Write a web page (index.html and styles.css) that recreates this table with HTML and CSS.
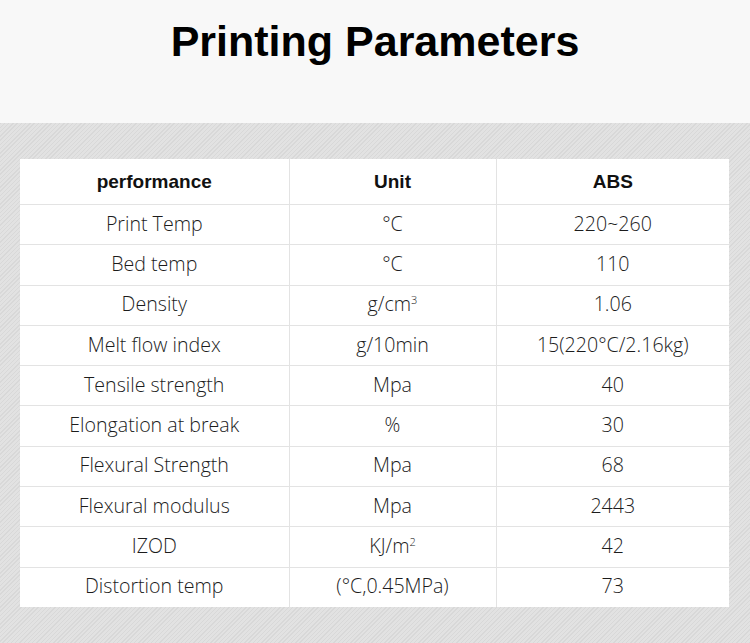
FILE: index.html
```html
<!DOCTYPE html>
<html>
<head>
<meta charset="utf-8">
<link rel="stylesheet" href="styles.css">
</head>
<body>
<header class="top">
  <h1 class="title">Printing Parameters</h1>
</header>
<section class="panel">
  <table class="params">
    <colgroup>
      <col class="c1"><col class="c2"><col class="c3">
    </colgroup>
    <thead>
      <tr><th>performance</th><th>Unit</th><th>ABS</th></tr>
    </thead>
    <tbody>
      <tr><td>Print Temp</td><td>°C</td><td>220~260</td></tr>
      <tr><td>Bed temp</td><td>°C</td><td>110</td></tr>
      <tr><td>Density</td><td>g/cm<sup>3</sup></td><td>1.06</td></tr>
      <tr><td>Melt flow index</td><td>g/10min</td><td>15(220°C/2.16kg)</td></tr>
      <tr><td>Tensile strength</td><td>Mpa</td><td>40</td></tr>
      <tr><td>Elongation at break</td><td>%</td><td>30</td></tr>
      <tr><td>Flexural Strength</td><td>Mpa</td><td>68</td></tr>
      <tr><td>Flexural modulus</td><td>Mpa</td><td>2443</td></tr>
      <tr><td>IZOD</td><td>KJ/m<sup>2</sup></td><td>42</td></tr>
      <tr><td>Distortion temp</td><td>(°C,0.45MPa)</td><td>73</td></tr>
    </tbody>
  </table>
</section>
</body>
</html>
```

FILE: styles.css
```css
html, body {
  margin: 0;
  padding: 0;
}
body {
  width: 750px;
  height: 643px;
  overflow: hidden;
  font-family: "Liberation Sans", Arial, sans-serif;
  color: #1a1a1a;
}
.top {
  height: 123px;
  background: #f8f8f8;
  display: flex;
  justify-content: center;
}
.title {
  margin: 13px 0 0;
  font-size: 43px;
  font-weight: bold;
  line-height: 56px;
  color: #000;
}
.panel {
  height: 520px;
  box-sizing: border-box;
  padding: 36px 21px 35px 20px;
  background-color: #dedede;
  background-image: repeating-linear-gradient(135deg, #d8d8d8 0 1px, #e2e2e2 1px 3px);
}
.params {
  width: 709px;
  border-collapse: collapse;
  background: #fff;
  table-layout: fixed;
}
.c1 { width: 269px; }
.c2 { width: 207px; }
.c3 { width: 233px; }
.params th, .params td {
  text-align: center;
  padding: 0;
  border-top: 1px solid #e3e3e3;
  border-left: 1px solid #e3e3e3;
}
.params th:first-child, .params td:first-child {
  border-left: none;
}
.params thead th {
  border-top: none;
  height: 45px;
  font-family: "Liberation Sans", Arial, sans-serif;
  font-weight: bold;
  color: #111;
  font-size: 19px;
}
.params tbody td {
  height: 37.3px;
  padding-bottom: 2px;
  font-family: "Open Sans", "Liberation Sans", sans-serif;
  font-weight: 300;
  font-size: 19.6px;
  line-height: 24px;
  color: #1c1c1c;
}
.params sup {
  font-size: 11px;
  line-height: 0;
  vertical-align: 7px;
}
```
